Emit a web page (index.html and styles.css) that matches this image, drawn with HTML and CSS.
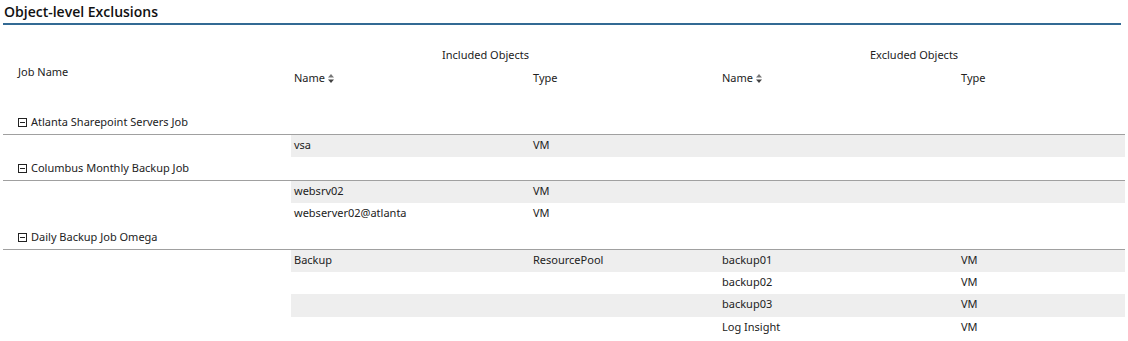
FILE: index.html
```html
<!DOCTYPE html>
<html>
<head>
    <link rel="stylesheet" href="styles.css">
</head>
<body>
    <div class="title">Object-level Exclusions</div>
    <table class="report">
        <colgroup>
            <col class="c-job">
            <col class="c-name">
            <col class="c-type">
            <col class="c-name">
            <col class="c-xtype">
        </colgroup>
        <thead>
            <tr class="head-top">
                <th rowspan="2" class="job-head">Job Name</th>
                <th colspan="2" class="group-head">Included Objects</th>
                <th colspan="2" class="group-head">Excluded Objects</th>
            </tr>
            <tr class="head-sub">
                <th>Name <svg class="sort" width="6" height="9" viewBox="0 0 6 9"><path d="M3 0L6 3.5H0Z" fill="#777"/><path d="M3 9L6 5.5H0Z" fill="#444"/></svg></th>
                <th>Type</th>
                <th>Name <svg class="sort" width="6" height="9" viewBox="0 0 6 9"><path d="M3 0L6 3.5H0Z" fill="#777"/><path d="M3 9L6 5.5H0Z" fill="#444"/></svg></th>
                <th>Type</th>
            </tr>
        </thead>
        <tbody>
            <tr class="job">
                <td colspan="5"><span class="toggle"></span>Atlanta Sharepoint Servers Job</td>
            </tr>
            <tr class="row odd"><td class="blank"></td><td>vsa</td><td>VM</td><td></td><td></td></tr>

            <tr class="job">
                <td colspan="5"><span class="toggle"></span>Columbus Monthly Backup Job</td>
            </tr>
            <tr class="row odd"><td class="blank"></td><td>websrv02</td><td>VM</td><td></td><td></td></tr>
            <tr class="row"><td class="blank"></td><td>webserver02@atlanta</td><td>VM</td><td></td><td></td></tr>

            <tr class="job">
                <td colspan="5"><span class="toggle"></span>Daily Backup Job Omega</td>
            </tr>
            <tr class="row odd"><td class="blank"></td><td>Backup</td><td>ResourcePool</td><td>backup01</td><td>VM</td></tr>
            <tr class="row"><td class="blank"></td><td></td><td></td><td>backup02</td><td>VM</td></tr>
            <tr class="row odd"><td class="blank"></td><td></td><td></td><td>backup03</td><td>VM</td></tr>
            <tr class="row"><td class="blank"></td><td></td><td></td><td>Log Insight</td><td>VM</td></tr>
        </tbody>
    </table>
</body>
</html>
```

FILE: styles.css
```css
body {
    margin: 0;
    padding: 0 3px;
    font-family: "Noto Sans", "Open Sans", sans-serif;
    font-size: 11px;
    color: #222;
    background: #ffffff;
}
.title {
    font-family: "Open Sans", "Noto Sans", sans-serif;
    font-size: 14px;
    font-weight: 600;
    color: #111;
    height: 23px;
    line-height: 23px;
    padding-left: 1px;
    border-bottom: 2px solid #336a94;
    width: 1117px;
}
.report {
    font-family: "Noto Sans", "Open Sans", sans-serif;
    font-size: 11px;
    color: #222;
    border-collapse: collapse;
    table-layout: fixed;
    width: 1122px;
}
.c-job { width: 288px; }
.c-name { width: 239px; }
.c-type { width: 189px; }
.c-xtype { width: 167px; }
.report th {
    font-weight: normal;
    text-align: left;
    line-height: 16px;
    padding: 0 0 0 3px;
}
.head-top {
    height: 41px;
}
.head-top .group-head {
    vertical-align: bottom;
    padding: 0 0 3px 151px;
}
.report .job-head {
    vertical-align: middle;
    padding: 8px 0 0 15px;
}
.head-sub {
    height: 45px;
}
.head-sub th {
    vertical-align: top;
    padding-top: 4px;
}
.sort {
    vertical-align: -1px;
}
.job td {
    height: 23.5px;
    padding: 3px 0 0 15px;
    box-sizing: border-box;
    vertical-align: top;
    line-height: 16px;
    border-bottom: 1px solid #a0a0a0;
}
.toggle {
    display: inline-block;
    width: 7px;
    height: 7px;
    border: 1px solid #222;
    margin-right: 4px;
    vertical-align: -1px;
    background: linear-gradient(#222, #222) center / 5px 1px no-repeat;
}
.row td {
    height: 22.5px;
    padding: 0 0 2px 3px;
    box-sizing: border-box;
    line-height: 16px;
    vertical-align: middle;
}
.row.odd td {
    background: #eeeeee;
}
.row.odd td.blank {
    background: none;
}
```
